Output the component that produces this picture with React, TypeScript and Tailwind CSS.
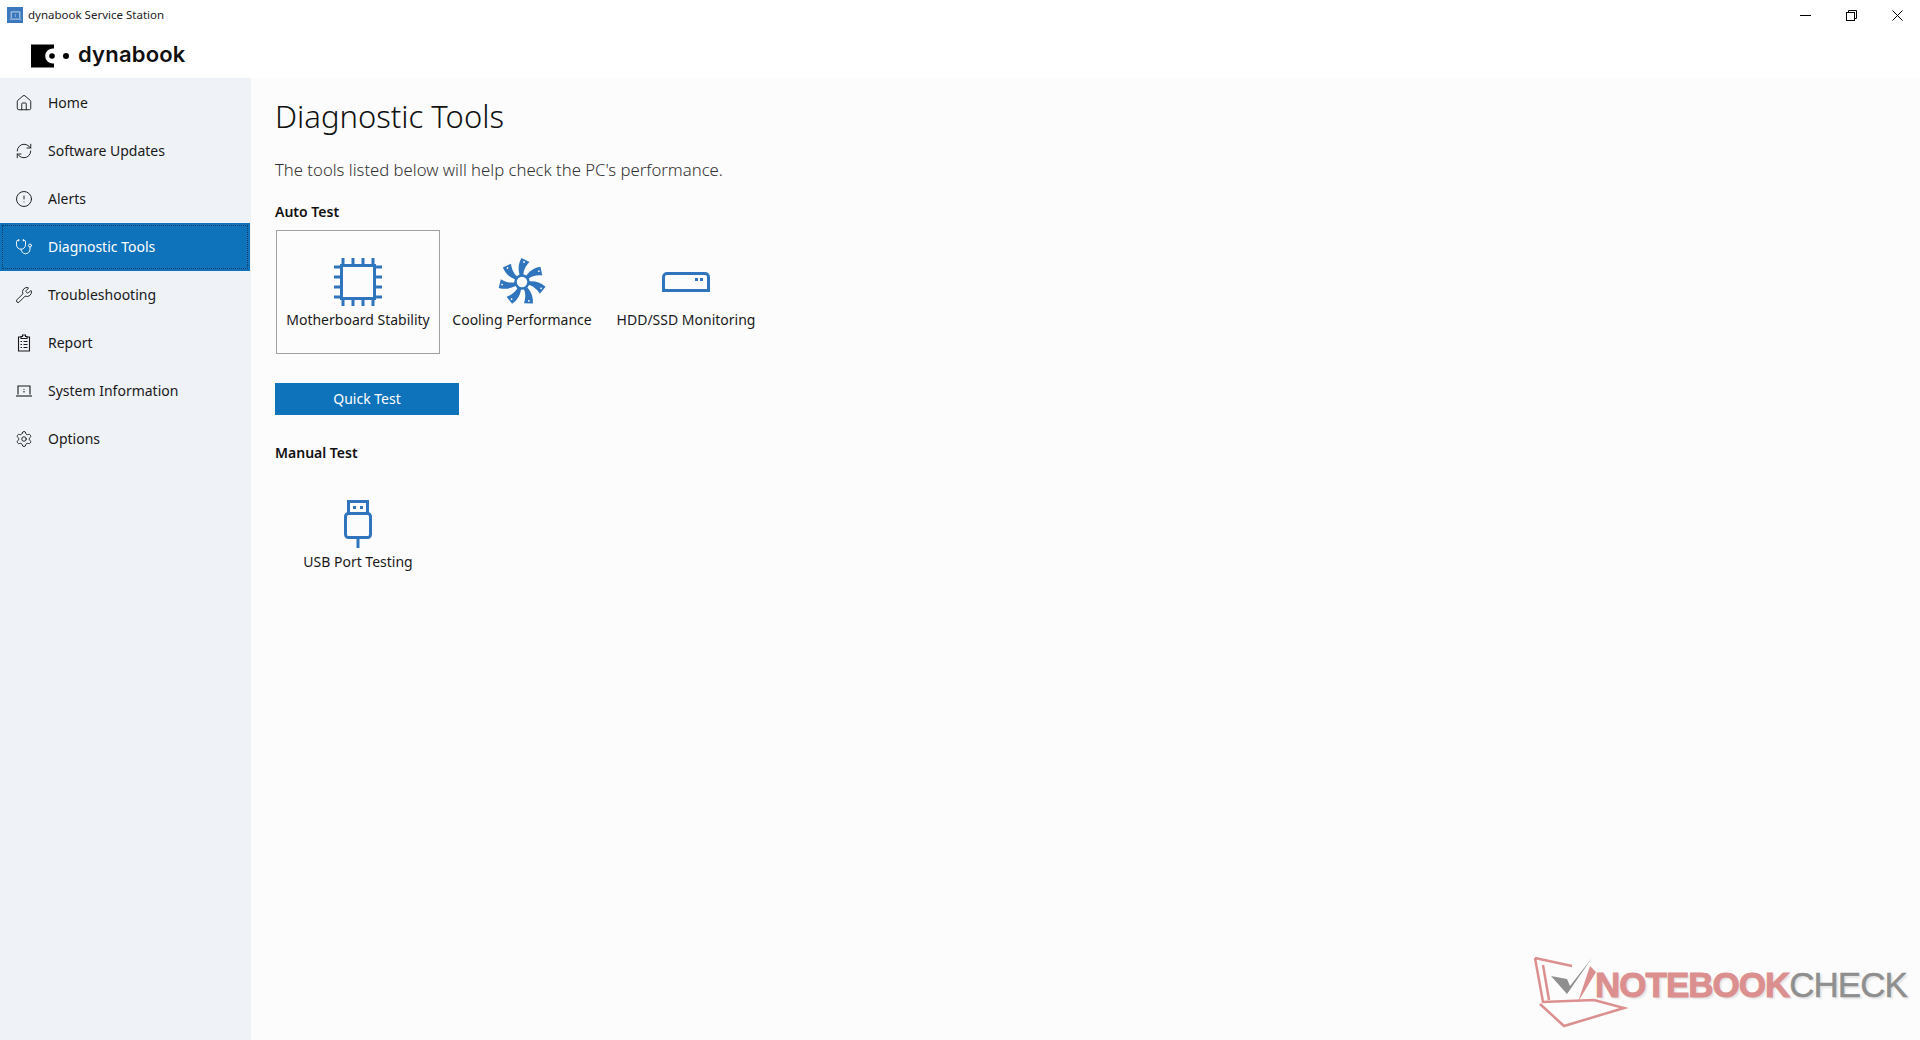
import { Home, RefreshCw, CircleAlert, Stethoscope, Wrench, Settings } from "lucide-react";

function ReportIcon({ size = 18 }: { size?: number }) {
  return (
    <svg width={size} height={size} viewBox="0 0 18 18" fill="none" stroke="currentColor" strokeWidth="1.1">
      <path d="M6 3H3.5V17H14.5V3H12" />
      <path d="M6 4.5V2.5H7.5V1H10.5V2.5H12V4.5Z" />
      <path d="M5.5 7.5H7M5.5 10.5H7M5.5 13.5H7M8.5 7.5H12.5M8.5 10.5H12.5M8.5 13.5H12.5" />
    </svg>
  );
}

function LaptopIcon({ size = 18 }: { size?: number }) {
  return (
    <svg width={size} height={size} viewBox="0 0 18 18" fill="none" stroke="currentColor" strokeWidth="1.1">
      <path d="M3 12.5V4H15V12.5" />
      <path d="M1 14H17" />
      <path d="M9 7V7.8M9 9V10.5" />
    </svg>
  );
}

const navItems = [
  { label: "Home", icon: Home },
  { label: "Software Updates", icon: RefreshCw },
  { label: "Alerts", icon: CircleAlert },
  { label: "Diagnostic Tools", icon: Stethoscope, active: true },
  { label: "Troubleshooting", icon: Wrench },
  { label: "Report", icon: ReportIcon },
  { label: "System Information", icon: LaptopIcon },
  { label: "Options", icon: Settings },
];

function ChipIcon() {
  const ticks = [8, 18, 28, 38];
  return (
    <svg width="48" height="48" viewBox="0 0 48 48" fill="none" stroke="#2f74bd" strokeWidth="3">
      <rect x="7.5" y="7.5" width="33" height="33" />
      {ticks.map((t) => (
        <path key={t} d={`M${t + 1} 0V7M${t + 1} 41V48M0 ${t + 1}H7M41 ${t + 1}H48`} />
      ))}
    </svg>
  );
}

function FanIcon() {
  const angles = [0, 51.4, 102.8, 154.2, 205.6, 257, 308.4];
  return (
    <svg width="48" height="48" viewBox="0 0 48 48" fill="none">
      {angles.map((a) => (
        <g key={a} transform={`rotate(${a} 24 24)`}>
          <path d="M22 18C20 12 20 6 23.5 0L31.5 4C27.5 8 25 13 25.5 18Z" fill="#2f74bd" />
          <circle cx="26" cy="4" r="0.9" fill="#fcfcfc" />
        </g>
      ))}
      <circle cx="24" cy="24" r="6.5" fill="#fcfcfc" stroke="#2f74bd" strokeWidth="2.5" />
    </svg>
  );
}

function DriveIcon() {
  return (
    <svg width="48" height="48" viewBox="0 0 48 48" fill="none">
      <path d="M1.5 32.5V19A3.5 3.5 0 0 1 5 15.5H43A3.5 3.5 0 0 1 46.5 19V32.5Z" stroke="#2f74bd" strokeWidth="3" />
      <rect x="33" y="20" width="3" height="3" fill="#2f74bd" />
      <rect x="38" y="20" width="3" height="3" fill="#2f74bd" />
    </svg>
  );
}

function UsbIcon() {
  return (
    <svg width="28" height="48" viewBox="0 0 28 48" fill="none" stroke="#2f74bd" strokeWidth="3">
      <path d="M4.5 14V1.5H23.5V14" />
      <rect x="1.5" y="13.5" width="25" height="24" rx="3" />
      <path d="M14 38V48" />
      <rect x="9" y="6" width="3" height="3" fill="#2f74bd" stroke="none" />
      <rect x="16" y="6" width="3" height="3" fill="#2f74bd" stroke="none" />
    </svg>
  );
}

function ToolCard({ label, selected, icon }: { label: string; selected?: boolean; icon: React.ReactNode }) {
  return (
    <div
      className={`w-[164px] h-[124px] flex flex-col items-center border ${
        selected ? "border-[#a0a0a0]" : "border-transparent"
      }`}
    >
      <div className="h-[48px] mt-[27px] flex items-center justify-center">{icon}</div>
      <div className="mt-[4px] text-[14px] text-[#1a1a1a] whitespace-nowrap leading-5">{label}</div>
    </div>
  );
}

export default function App() {
  return (
    <div className="w-[1920px] h-[1040px] flex flex-col overflow-hidden relative bg-[#fcfcfc] font-['Noto_Sans',sans-serif] text-[#1a1a1a]">
      {/* title bar */}
      <div className="h-[30px] bg-white flex items-center shrink-0">
        <div className="ml-[7px] w-4 h-4 bg-[#3b78bd] text-[#e4eef9] flex items-center justify-center">
          <LaptopIcon size={13} />
        </div>
        <span className="ml-[5px] text-[11.5px] text-[#222]">dynabook Service Station</span>
        <div className="ml-auto flex items-center">
          <div className="w-[46px] h-[30px] flex items-center justify-center">
            <div className="w-[11px] h-px bg-black" />
          </div>
          <div className="w-[46px] h-[30px] flex items-center justify-center">
            <svg width="11" height="11" viewBox="0 0 11 11" fill="none" stroke="#000">
              <rect x="0.5" y="2.5" width="8" height="8" />
              <path d="M2.5 2.5V0.5H10.5V8.5H8.5" />
            </svg>
          </div>
          <div className="w-[46px] h-[30px] flex items-center justify-center">
            <svg width="11" height="11" viewBox="0 0 11 11" fill="none" stroke="#000">
              <path d="M0.5 0.5L10.5 10.5M10.5 0.5L0.5 10.5" />
            </svg>
          </div>
        </div>
      </div>

      {/* logo band */}
      <div className="h-[48px] bg-white flex items-center shrink-0 pl-[31px]">
        <svg width="38" height="24" viewBox="0 0 38 24" className="mt-[3px]">
          <path d="M0 0.5H23V4.5A7.6 7.6 0 1 0 23 19.5V23.5H0Z" fill="#000" />
          <circle cx="21" cy="12" r="2.8" fill="#000" />
          <circle cx="35" cy="12" r="3" fill="#000" />
        </svg>
        <span className="ml-[9px] text-[22px] font-semibold tracking-[0.2px] text-[#111] font-['Inter',sans-serif] leading-none">
          dynabook
        </span>
      </div>

      <div className="flex flex-1 min-h-0">
        {/* sidebar */}
        <nav className="w-[251px] bg-[#eff2f7] shrink-0 pt-px">
          {navItems.map((item) => {
            const Icon = item.icon;
            return (
              <div
                key={item.label}
                className={`h-[48px] w-[250px] flex items-center pl-[15px] ${
                  item.active
                    ? "bg-[#0f73bc] text-white outline-1 outline-dotted -outline-offset-3 outline-[#0b3a63]"
                    : "text-[#1a1a1a]"
                }`}
              >
                <Icon size={18} strokeWidth={1.25} />
                <span className="ml-[15px] mb-[2px] text-[14px]">{item.label}</span>
              </div>
            );
          })}
        </nav>

        {/* main content */}
        <main className="flex-1 pl-[24px]">
          <h1 className="mt-[15px] text-[31px] font-light leading-[46px] text-[#111]">Diagnostic Tools</h1>
          <p className="mt-[19px] text-[16.7px] font-light leading-6 text-[#333]">
            The tools listed below will help check the PC's performance.
          </p>
          <h2 className="mt-[20px] text-[14px] font-semibold leading-5 text-[#111]">Auto Test</h2>
          <div className="mt-[8px] flex ml-px">
            <ToolCard label="Motherboard Stability" selected icon={<ChipIcon />} />
            <ToolCard label="Cooling Performance" icon={<FanIcon />} />
            <ToolCard label="HDD/SSD Monitoring" icon={<DriveIcon />} />
          </div>
          <button className="mt-[29px] w-[184px] h-[32px] pb-[2px] bg-[#0f73bc] text-white text-[14px] block">Quick Test</button>
          <h2 className="mt-[28px] text-[14px] font-semibold leading-5 text-[#111]">Manual Test</h2>
          <div className="mt-[9px] flex ml-px">
            <ToolCard label="USB Port Testing" icon={<UsbIcon />} />
          </div>
        </main>
      </div>

      {/* watermark */}
      <div className="absolute left-[1520px] top-[940px] w-[400px] h-[100px]">
        <svg width="120" height="100" viewBox="0 0 120 100" fill="none" className="absolute left-0 top-0">
          <path
            d="M15 18L52 26M15 18L23 62L74 60M20 64L44 86L104 68L74 60M23 25L29 60"
            stroke="#dc8f8f"
            strokeWidth="2.5"
          />
          <path d="M70 26L58 62L76 32Z" fill="#dc8f8f" />
          <path d="M31 36L47 39L50 46L72 18L47 54Z" fill="#8f8f8f" />
        </svg>
        <div className="absolute left-[75px] top-[25px] flex items-center h-[38px] [text-shadow:2px_2px_2px_#e2e2e2] font-['Liberation_Sans',sans-serif] text-[35px] leading-none tracking-[-1px]">
          <span className="font-bold text-[#dc8f8f] [-webkit-text-stroke:1px_#dc8f8f]">NOTEBOOK</span>
          <span className="text-[#8f8f8f] [-webkit-text-stroke:0.5px_#8f8f8f]">CHECK</span>
        </div>
      </div>
    </div>
  );
}
